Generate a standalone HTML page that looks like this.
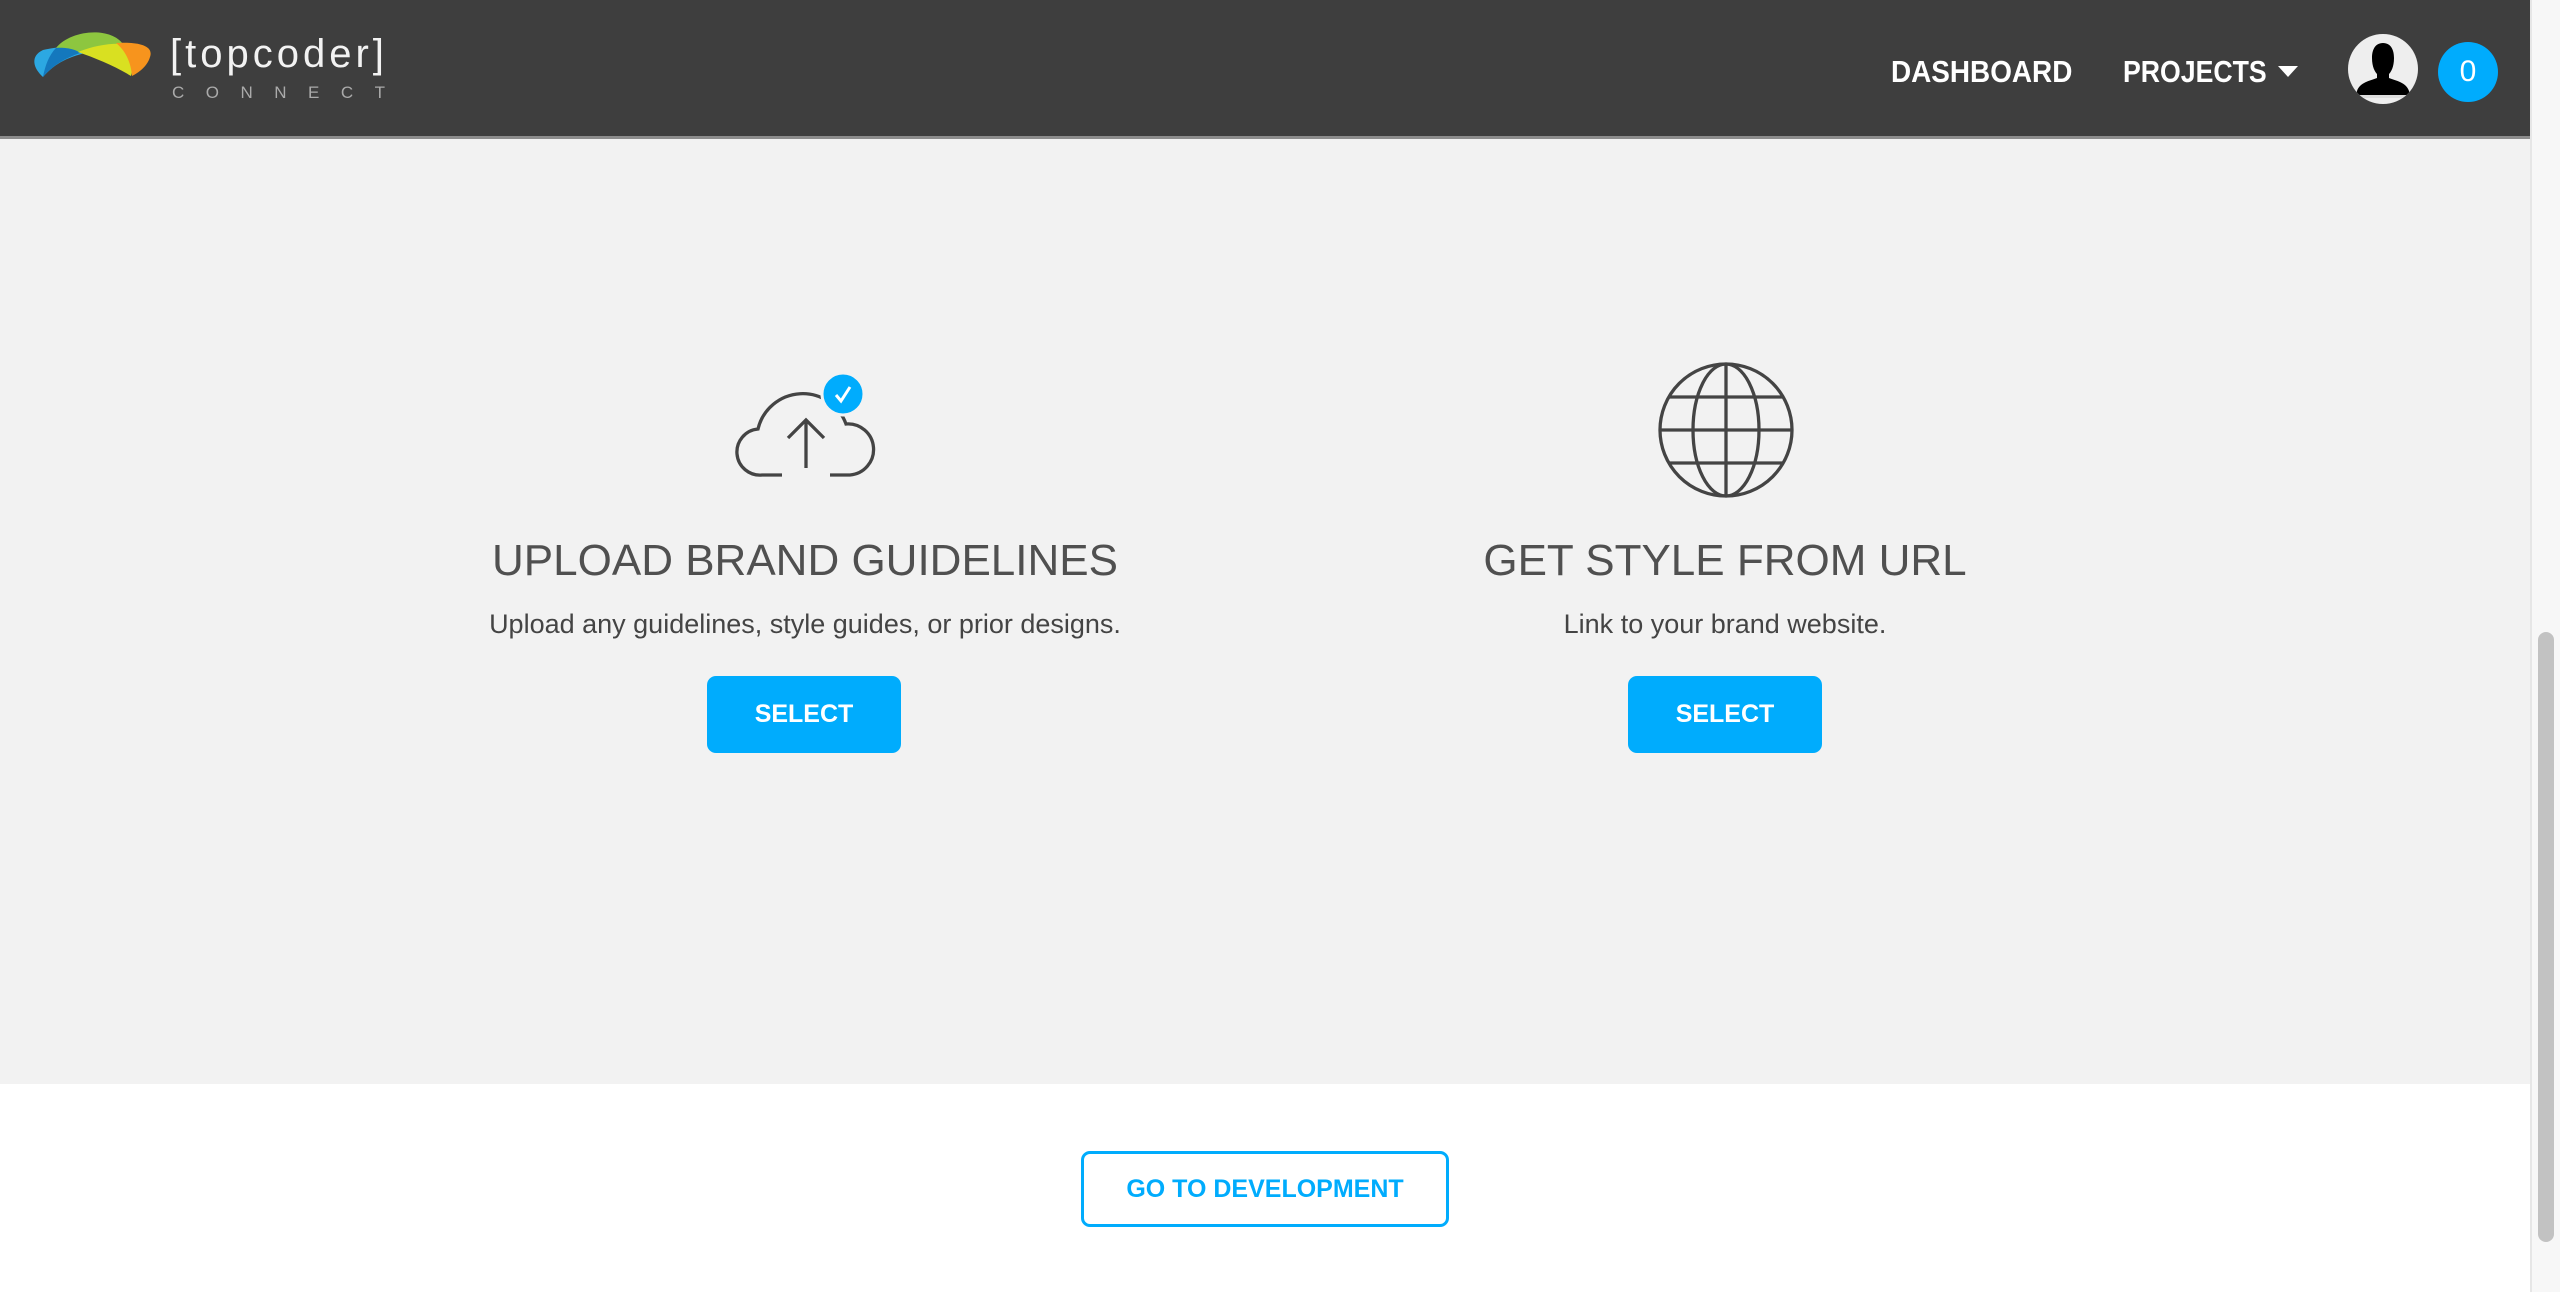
<!DOCTYPE html>
<html><head><meta charset="utf-8">
<style>
*{margin:0;padding:0;box-sizing:border-box}
html,body{width:2560px;height:1292px;overflow:hidden;font-family:"Liberation Sans",sans-serif}
body{background:#fff;position:relative}
.hdr{position:absolute;left:0;top:0;width:2530px;height:139px;background:#3e3e3e;border-bottom:3px solid #8c8c8c}
.gray{position:absolute;left:0;top:139px;width:2530px;height:945px;background:#f2f2f2}
.sb{position:absolute;left:2530px;top:0;width:30px;height:1292px;background:#f7f7f7;border-left:2px solid #e6e6e6}
.thumb{position:absolute;left:2538px;top:632px;width:16px;height:610px;background:#c2c2c2;border-radius:8px}
.abs{position:absolute}
.nav{position:absolute;top:52px;color:#fff;font-weight:bold;font-size:31px;line-height:40px;transform-origin:0 50%}
.title{position:absolute;width:1000px;text-align:center;font-size:44px;color:#505050;line-height:50px;top:536px}
.sub{position:absolute;width:1000px;text-align:center;font-size:27px;color:#444;line-height:30px;top:609px}
.btn{position:absolute;top:676px;width:194px;height:77px;background:#00acfd;border-radius:9px;color:#fff;font-weight:bold;font-size:25px;text-align:center;line-height:77px}
.go{position:absolute;left:1081px;top:1151px;width:368px;height:76px;border:3px solid #00acfd;border-radius:9px;color:#00acfd;font-weight:bold;font-size:25px;text-align:center;line-height:70px;background:#fff}
</style></head><body>
<div class="hdr"></div>
<div class="gray"></div>
<div class="sb"></div><div class="thumb"></div>

<svg class="abs" style="left:30px;top:28px" width="125" height="55" viewBox="0 0 125 55">
  <path d="M13,22 C30,18 42,18 60,24 C40,28 25,35 13,49 C3,40 0,28 13,22Z" fill="#2ca8e2"/>
  <path d="M26,20 C40,2 80,-2 93,16 C75,16 60,19 48,25 C40,21 32,20 26,20Z" fill="#8dc63f"/>
  <path d="M26,20 C37,19 47,22 50,25 C35,30 22,38 13,49 C15,38 19,27 26,20Z" fill="#1478bd"/>
  <path d="M48,24 C63,18 80,15 93,16 C103,25 104,38 101,48 C85,38 65,30 48,24Z" fill="#d9e021"/>
  <path d="M86,15 C100,14 125,15 120,29 C117,39 108,45 102,48 C101,35 96,23 86,15Z" fill="#f7941d"/>
</svg>
<div class="abs" style="left:170px;top:30px;color:#f2f2f2;font-size:40px;letter-spacing:4px;line-height:48px">[topcoder]</div>
<div class="abs" style="left:172px;top:83px;color:#aaa;font-size:17px;letter-spacing:21.5px;line-height:20px">CONNECT</div>

<div class="nav" style="left:1891px;transform:scaleX(0.9)">DASHBOARD</div>
<div class="nav" style="left:2123px;transform:scaleX(0.86)">PROJECTS</div>
<svg class="abs" style="left:2278px;top:66px" width="22" height="12"><path d="M0,0 H20 L10,11Z" fill="#fff"/></svg>
<svg class="abs" style="left:2348px;top:34px" width="70" height="70" viewBox="0 0 70 70">
  <defs><clipPath id="c"><circle cx="35" cy="35" r="35"/></clipPath></defs>
  <circle cx="35" cy="35" r="35" fill="#eee"/>
  <g clip-path="url(#c)">
  <path d="M35,9 C27,9 24,16 24,24 C24,33 27,38 29,40 L29,44 C22,47 12,48 9,57 L8,61 H62 L61,57 C58,48 48,47 41,44 L41,40 C43,38 46,33 46,24 C46,16 43,9 35,9Z" fill="#000"/>
  <rect x="0" y="61" width="70" height="3" fill="#ddd"/>
  </g>
</svg>
<div class="abs" style="left:2438px;top:42px;width:60px;height:60px;border-radius:50%;background:#00acfd;color:#fff;font-size:30px;text-align:center;line-height:60px">0</div>

<svg class="abs" style="left:700px;top:340px" width="200" height="160" viewBox="0 0 200 160">
  <g fill="none" stroke="#444" stroke-width="3.3">
    <path d="M82,135 H62 A23,23 0 0 1 58,89 A46,46 0 0 1 146,84 A25,25 0 0 1 150,135 H130"/>
    <path d="M106,128 V80 M88,98 L106,80 L124,98"/>
  </g>
  <circle cx="143" cy="54" r="21" fill="#00acfd" stroke="#f2f2f2" stroke-width="3"/>
  <path d="M136,55 L141,61 L150,47" fill="none" stroke="#fff" stroke-width="3"/>
</svg>

<svg class="abs" style="left:1640px;top:350px" width="170" height="160" viewBox="0 0 170 160">
  <g fill="none" stroke="#444" stroke-width="3.3">
    <circle cx="86" cy="80" r="66"/>
    <ellipse cx="86" cy="80" rx="33" ry="66"/>
    <path d="M86,14 V146 M20,80 H152 M28,47 H144 M28,113 H144"/>
  </g>
</svg>

<div class="title" style="left:305px">UPLOAD BRAND GUIDELINES</div>
<div class="sub" style="left:305px">Upload any guidelines, style guides, or prior designs.</div>
<div class="btn" style="left:707px">SELECT</div>

<div class="title" style="left:1225px">GET STYLE FROM URL</div>
<div class="sub" style="left:1225px">Link to your brand website.</div>
<div class="btn" style="left:1628px">SELECT</div>

<div class="go">GO TO DEVELOPMENT</div>
</body></html>
